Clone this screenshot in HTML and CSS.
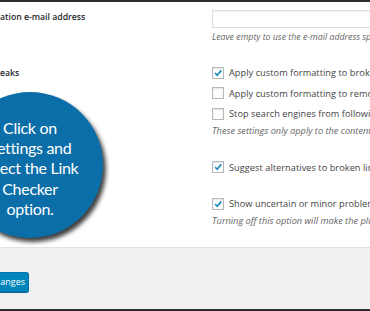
FILE: index.html
```html
<!DOCTYPE html>
<html>
<head>
<meta charset="utf-8">
<link rel="stylesheet" href="styles.css">
</head>
<body>
<div class="frame">
  <div class="edge"></div>
  <div class="content">
    <div class="row row-email">
      <div class="label">ation e-mail address</div>
      <div class="field">
        <div class="input"></div>
        <p class="desc desc-email">Leave empty to use the e-mail address specified in Settings → General.</p>
      </div>
    </div>
    <div class="row row-tweaks">
      <div class="label">eaks</div>
      <div class="field">
        <div class="check"><span class="box on"><svg viewBox="0 0 10 10"><path d="M2.2 5.2 L4.2 7.3 L8.3 2.4"/></svg></span>Apply custom formatting to broken links</div>
        <div class="check"><span class="box"></span>Apply custom formatting to removed links</div>
        <div class="check"><span class="box"></span>Stop search engines from following broken links</div>
        <p class="desc">These settings only apply to the content of posts, not comments or custom fields.</p>
      </div>
    </div>
    <div class="row row-suggest">
      <div class="label"></div>
      <div class="field">
        <div class="check"><span class="box on"><svg viewBox="0 0 10 10"><path d="M2.2 5.2 L4.2 7.3 L8.3 2.4"/></svg></span>Suggest alternatives to broken links</div>
      </div>
    </div>
    <div class="row row-warn">
      <div class="label"></div>
      <div class="field">
        <div class="check"><span class="box on"><svg viewBox="0 0 10 10"><path d="M2.2 5.2 L4.2 7.3 L8.3 2.4"/></svg></span>Show uncertain or minor problems as "warnings" instead of "broken"</div>
        <p class="desc">Turning off this option will make the plugin report all problems as broken links.</p>
      </div>
    </div>
  </div>
  <div class="footer">
    <span class="button">anges</span>
  </div>
  <div class="edge"></div>
  <div class="callout">
    <div class="callout-text">Click on<br>Settings and<br>select the Link<br>Checker<br>option.</div>
  </div>
</div>
</body>
</html>
```
FILE: styles.css
```css
html, body {
  margin: 0;
  padding: 0;
  width: 370px;
  height: 311px;
  overflow: hidden;
  background: #ffffff;
}
.frame {
  position: relative;
  width: 370px;
  height: 311px;
  display: flex;
  flex-direction: column;
  font-family: "Open Sans", "Noto Sans", sans-serif;
  overflow: hidden;
}
.edge {
  height: 2px;
  background: #2d2d2d;
  flex: none;
}
.content {
  height: 245px;
  flex: none;
  background: #fff;
}
.row {
  display: grid;
  grid-template-columns: 212px 1fr;
}
.label {
  font-size: 8.7px;
  font-weight: 600;
  color: #23282d;
  white-space: nowrap;
}
.field {
  min-width: 0;
  white-space: nowrap;
}
.row-email {
  padding-top: 8px;
}
.row-email .label {
  line-height: 13px;
  padding-top: 1px;
}
.input {
  height: 16px;
  border: 1px solid #dcdcdc;
  border-right: none;
  box-shadow: inset 0 1px 2px rgba(0,0,0,0.05);
}
.desc {
  margin: 0;
  font-size: 9.2px;
  font-style: italic;
  color: #666;
  line-height: 13px;
}
.desc-email {
  font-size: 8.8px;
}
.row-email .desc {
  margin-top: 3px;
}
.row-tweaks {
  margin-top: 18.5px;
}
.row-tweaks .label {
  line-height: 20.5px;
}
.check {
  display: flex;
  align-items: center;
  height: 20.5px;
  font-size: 9.2px;
  color: #444;
  letter-spacing: 0.05px;
}
.box {
  flex: none;
  width: 10px;
  height: 10px;
  border: 1px solid #b4b9be;
  background: #fefefe;
  box-shadow: inset 0 1px 2px rgba(0,0,0,0.1);
  margin-right: 5px;
  display: flex;
}
.box svg {
  width: 10px;
  height: 10px;
}
.box path {
  fill: none;
  stroke: #1e8cbe;
  stroke-width: 1.7;
}
.row-suggest {
  margin-top: 20px;
}
.row-warn {
  margin-top: 16px;
}
.footer {
  flex: 1;
  background: #f1f1f1;
  border-top: 1px solid #e2e2e2;
  padding-top: 20px;
}
.button {
  display: inline-flex;
  align-items: center;
  justify-content: flex-end;
  box-sizing: border-box;
  width: 29px;
  height: 20px;
  padding-right: 3px;
  background: #0085ba;
  border: 1px solid #0073aa;
  border-left: none;
  border-radius: 0 3px 3px 0;
  box-shadow: 0 1px 0 #006799;
  color: #fff;
  font-size: 9px;
  font-family: "Open Sans", sans-serif;
}
.callout {
  position: absolute;
  left: -43px;
  top: 92px;
  width: 146px;
  height: 146px;
  border-radius: 50%;
  background: #0c6ea8;
  box-shadow: 3px 4px 4px rgba(0,0,0,0.75);
  display: flex;
  align-items: center;
  justify-content: center;
}
.callout-text {
  padding-top: 7px;
  color: #fff;
  font-family: Lato, sans-serif;
  font-size: 16px;
  letter-spacing: -0.3px;
  line-height: 20.3px;
  text-align: center;
  white-space: nowrap;
}
```
